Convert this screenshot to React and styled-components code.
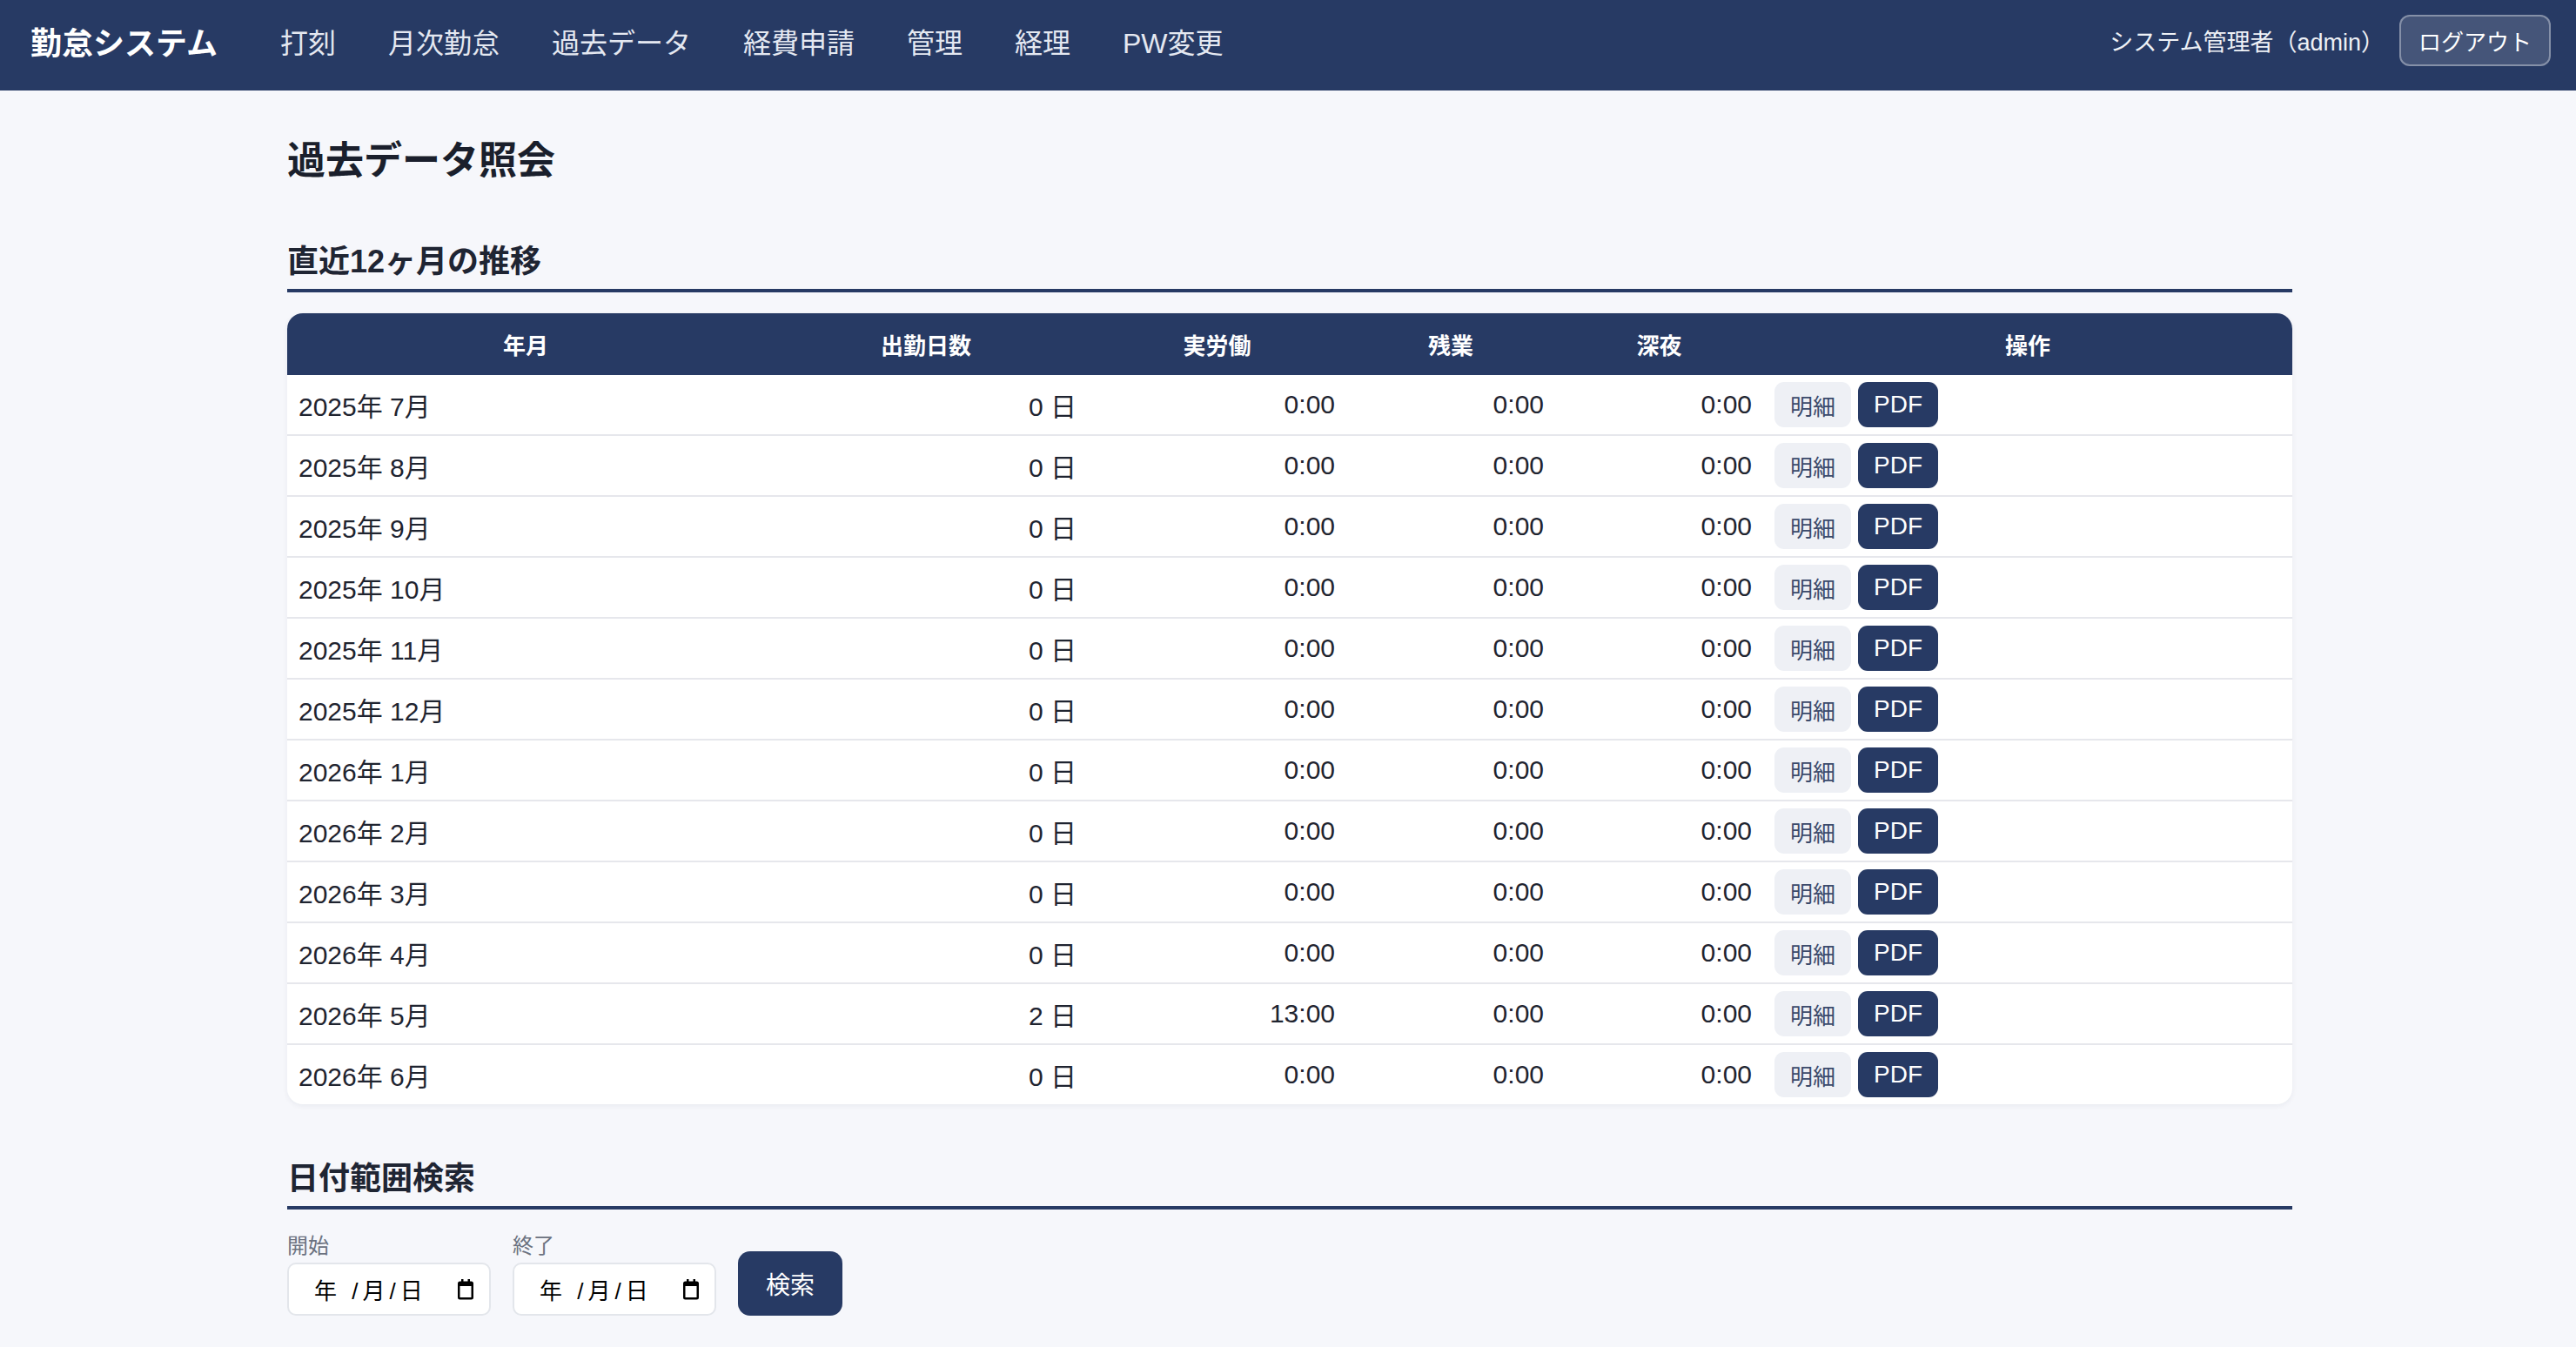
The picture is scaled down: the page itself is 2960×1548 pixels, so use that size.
import React from "react";
import styled, { createGlobalStyle } from "styled-components";

const NAVY = "#273a64";
const FONT = `"Liberation Sans", "Noto Sans CJK JP", sans-serif`;

const GlobalStyle = createGlobalStyle`
  body {
    margin: 0;
    background: #f6f7fb;
    font-family: ${FONT};
    color: #1f2430;
  }
`;

const rows = [
  { ym: "2025年 7月", days: 0, work: "0:00" },
  { ym: "2025年 8月", days: 0, work: "0:00" },
  { ym: "2025年 9月", days: 0, work: "0:00" },
  { ym: "2025年 10月", days: 0, work: "0:00" },
  { ym: "2025年 11月", days: 0, work: "0:00" },
  { ym: "2025年 12月", days: 0, work: "0:00" },
  { ym: "2026年 1月", days: 0, work: "0:00" },
  { ym: "2026年 2月", days: 0, work: "0:00" },
  { ym: "2026年 3月", days: 0, work: "0:00" },
  { ym: "2026年 4月", days: 0, work: "0:00" },
  { ym: "2026年 5月", days: 2, work: "13:00" },
  { ym: "2026年 6月", days: 0, work: "0:00" },
];

const navLinks = ["打刻", "月次勤怠", "過去データ", "経費申請", "管理", "経理", "PW変更"];

export default function App() {
  return (
    <Page>
      <GlobalStyle />
      <NavBar>
        <Brand>勤怠システム</Brand>
        <NavList>
          {navLinks.map((l) => (
            <NavLink key={l}>{l}</NavLink>
          ))}
        </NavList>
        <UserArea>
          <UserName>システム管理者（admin）</UserName>
          <LogoutBtn>ログアウト</LogoutBtn>
        </UserArea>
      </NavBar>

      <Main>
        <Title>過去データ照会</Title>

        <SectionTitle>直近12ヶ月の推移</SectionTitle>
        <TableCard>
          <Table>
            <colgroup>
              <col style={{ width: 548 }} />
              <col style={{ width: 372 }} />
              <col style={{ width: 297 }} />
              <col style={{ width: 240 }} />
              <col style={{ width: 239 }} />
              <col />
            </colgroup>
            <thead>
              <tr>
                <Th>年月</Th>
                <Th>出勤日数</Th>
                <Th>実労働</Th>
                <Th>残業</Th>
                <Th>深夜</Th>
                <Th>操作</Th>
              </tr>
            </thead>
            <tbody>
              {rows.map((r) => (
                <Tr key={r.ym}>
                  <Td>{r.ym}</Td>
                  <Td $num>{r.days} 日</Td>
                  <Td $num>{r.work}</Td>
                  <Td $num>0:00</Td>
                  <Td $num>0:00</Td>
                  <Td>
                    <Actions>
                      <SmallBtn>明細</SmallBtn>
                      <SmallBtn $primary>PDF</SmallBtn>
                    </Actions>
                  </Td>
                </Tr>
              ))}
            </tbody>
          </Table>
        </TableCard>

        <SectionTitle $spaced>日付範囲検索</SectionTitle>
        <SearchRow>
          <Field>
            <FieldLabel>開始</FieldLabel>
            <DateBox>
              <DateText>年 /月/日</DateText>
              <CalendarIcon />
            </DateBox>
          </Field>
          <Field>
            <FieldLabel>終了</FieldLabel>
            <DateBox>
              <DateText>年 /月/日</DateText>
              <CalendarIcon />
            </DateBox>
          </Field>
          <SearchBtn>検索</SearchBtn>
        </SearchRow>
      </Main>
    </Page>
  );
}

function CalendarIcon() {
  return (
    <svg width="22" height="26" viewBox="0 0 22 26">
      <rect x="6" y="1" width="2.5" height="5" fill="#000" />
      <rect x="13.5" y="1" width="2.5" height="5" fill="#000" />
      <rect x="2" y="3.5" width="18" height="21" rx="2.5" fill="#000" />
      <rect x="4.5" y="9" width="13" height="13" fill="#fff" />
    </svg>
  );
}

const Page = styled.div`
  min-height: 100vh;
  background: #f6f7fb;
`;

const NavBar = styled.header`
  box-sizing: border-box;
  display: flex;
  align-items: center;
  height: 104px;
  padding: 0 29px 11px 35px;
  background: ${NAVY};
`;

const Brand = styled.div`
  color: #fff;
  font-size: 36px;
  font-weight: 700;
  margin-right: 42px;
  white-space: nowrap;
`;

const NavList = styled.nav`
  display: flex;
  align-items: center;
`;

const NavLink = styled.a`
  padding: 0 30px;
  color: #e4e8f1;
  font-size: 32px;
  cursor: pointer;
  white-space: nowrap;
`;

const UserArea = styled.div`
  margin-left: auto;
  display: flex;
  align-items: center;
  gap: 17px;
`;

const UserName = styled.span`
  color: #eef1f6;
  font-size: 27px;
`;

const LogoutBtn = styled.button`
  height: 59px;
  padding: 0 20px;
  font-family: ${FONT};
  font-size: 26px;
  color: #fff;
  background: rgba(255, 255, 255, 0.14);
  border: 2px solid rgba(255, 255, 255, 0.35);
  border-radius: 12px;
`;

const Main = styled.main`
  width: 2304px;
  margin: 0 auto;
  padding: 48px 0 40px 4px;
`;

const Title = styled.h1`
  margin: 0 0 56px;
  font-size: 44px;
  line-height: 66px;
  font-weight: 700;
  color: #1a1f2c;
`;

const SectionTitle = styled.h2`
  margin: ${(p) => (p.$spaced ? "59px" : "0")} 0 24px;
  padding-bottom: 4px;
  font-size: 36px;
  line-height: 54px;
  font-weight: 700;
  color: #1f2533;
  border-bottom: 4px solid ${NAVY};
`;

const TableCard = styled.div`
  background: #fff;
  border-radius: 18px;
  overflow: hidden;
  box-shadow: 0 2px 6px rgba(20, 30, 60, 0.06);
`;

const Table = styled.table`
  width: 100%;
  border-collapse: collapse;
  table-layout: fixed;
`;

const Th = styled.th`
  height: 71px;
  padding: 0 12px;
  background: ${NAVY};
  color: #fff;
  font-size: 26px;
  font-weight: 700;
  text-align: center;
`;

const Tr = styled.tr`
  border-bottom: 2px solid #e6e7ec;
  &:last-child {
    border-bottom: none;
  }
`;

const Td = styled.td`
  height: 68px;
  padding: 0 13px;
  font-size: 30px;
  color: #1f2430;
  text-align: ${(p) => (p.$num ? "right" : "left")};
  white-space: nowrap;
`;

const Actions = styled.div`
  display: flex;
  gap: 8px;
`;

const SmallBtn = styled.button`
  height: 52px;
  padding: 0 18px;
  border: none;
  border-radius: 11px;
  font-family: ${FONT};
  font-size: ${(p) => (p.$primary ? "28px" : "26px")};
  color: ${(p) => (p.$primary ? "#fff" : "#3b4a6b")};
  background: ${(p) => (p.$primary ? NAVY : "#eef0f5")};
`;

const SearchRow = styled.div`
  display: flex;
  align-items: flex-end;
  gap: 25px;
  margin-top: 24px;
`;

const Field = styled.div`
  display: flex;
  flex-direction: column;
  gap: 1px;
`;

const FieldLabel = styled.label`
  font-size: 24px;
  line-height: 36px;
  color: #6b7280;
`;

const DateBox = styled.div`
  box-sizing: border-box;
  width: 234px;
  height: 61px;
  display: flex;
  align-items: center;
  justify-content: space-between;
  padding: 0 16px 0 29px;
  background: #fff;
  border: 2px solid #e3e6eb;
  border-radius: 10px;
`;

const DateText = styled.span`
  font-size: 26px;
  letter-spacing: 5px;
  color: #000;
  white-space: pre;
`;

const SearchBtn = styled.button`
  width: 120px;
  height: 74px;
  border: none;
  border-radius: 14px;
  background: ${NAVY};
  color: #fff;
  font-family: ${FONT};
  font-size: 28px;
`;
